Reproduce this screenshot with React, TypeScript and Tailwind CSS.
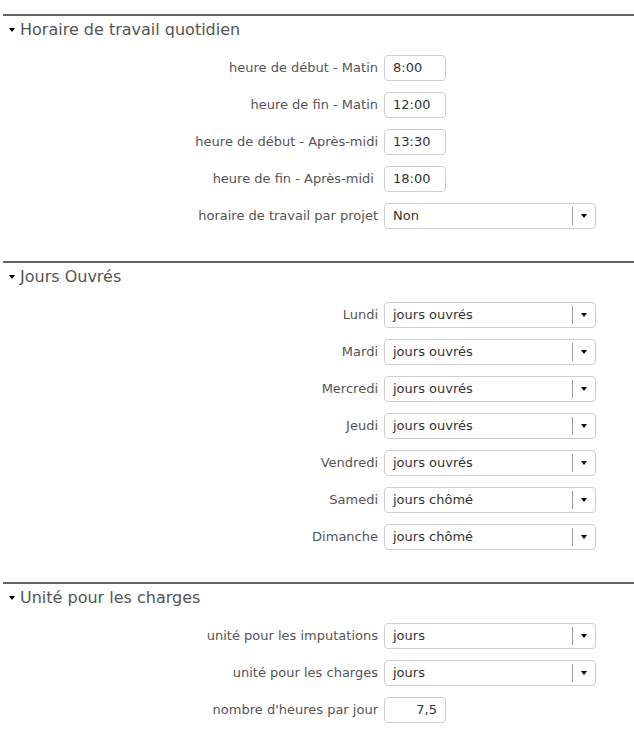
import React from 'react';

type Row = { label: string; kind: 'input' | 'select' | 'number'; value: string };

const sections: { title: string; rows: Row[] }[] = [
    {
        title: 'Horaire de travail quotidien',
        rows: [
            { label: 'heure de début - Matin', kind: 'input', value: '8:00' },
            { label: 'heure de fin - Matin', kind: 'input', value: '12:00' },
            { label: 'heure de début - Après-midi', kind: 'input', value: '13:30' },
            { label: 'heure de fin - Après-midi\u00a0', kind: 'input', value: '18:00' },
            { label: 'horaire de travail par projet', kind: 'select', value: 'Non' },
        ],
    },
    {
        title: 'Jours Ouvrés',
        rows: [
            { label: 'Lundi', kind: 'select', value: 'jours ouvrés' },
            { label: 'Mardi', kind: 'select', value: 'jours ouvrés' },
            { label: 'Mercredi', kind: 'select', value: 'jours ouvrés' },
            { label: 'Jeudi', kind: 'select', value: 'jours ouvrés' },
            { label: 'Vendredi', kind: 'select', value: 'jours ouvrés' },
            { label: 'Samedi', kind: 'select', value: 'jours chômé' },
            { label: 'Dimanche', kind: 'select', value: 'jours chômé' },
        ],
    },
    {
        title: 'Unité pour les charges',
        rows: [
            { label: 'unité pour les imputations', kind: 'select', value: 'jours' },
            { label: 'unité pour les charges', kind: 'select', value: 'jours' },
            { label: "nombre d'heures par jour", kind: 'number', value: '7,5' },
        ],
    },
];

const Field = ({ row }: { row: Row }) => {
    if (row.kind === 'select') {
        return (
            <div className="w-[212px] h-[26px] border border-[#cfcfcf] rounded-[4px] bg-white flex items-center text-[#333]">
                <span className="flex-1 pl-[8px]">{row.value}</span>
                <span className="h-[18px] border-l border-[#999]" />
                <span className="w-[22px] flex justify-center">
                    <span className="w-0 h-0 border-l-[3px] border-r-[3px] border-t-[4px] border-l-transparent border-r-transparent border-t-black" />
                </span>
            </div>
        );
    }
    return (
        <div
            className={
                'w-[62px] h-[26px] border border-[#cfcfcf] rounded-[4px] bg-white flex items-center text-[#333] ' +
                (row.kind === 'number' ? 'justify-end pr-[8px]' : 'pl-[8px]')
            }
        >
            {row.value}
        </div>
    );
};

export default function App() {
    return (
        <div className="bg-white min-h-screen pt-[14px] text-[13px] text-[#555]" style={{ fontFamily: '"DejaVu Sans", Verdana, sans-serif' }}>
            {sections.map((section, i) => (
                <section key={i} className="pb-[32px]">
                    <div className="ml-[3px] border-t-2 border-[#666]" />
                    <div className="h-[28px] flex items-center pl-[9px] gap-[5px]">
                        <span className="w-0 h-0 border-l-[3px] border-r-[3px] border-t-[4px] border-l-transparent border-r-transparent border-t-black" />
                        <h2 className="text-[16px] text-[#555]">{section.title}</h2>
                    </div>
                    <div className="pt-[11px] flex flex-col gap-[11px]">
                        {section.rows.map((row, j) => (
                            <div key={j} className="flex items-center">
                                <label className="w-[384px] text-right pr-[6px] whitespace-pre">{row.label}</label>
                                <Field row={row} />
                            </div>
                        ))}
                    </div>
                </section>
            ))}
        </div>
    );
}
